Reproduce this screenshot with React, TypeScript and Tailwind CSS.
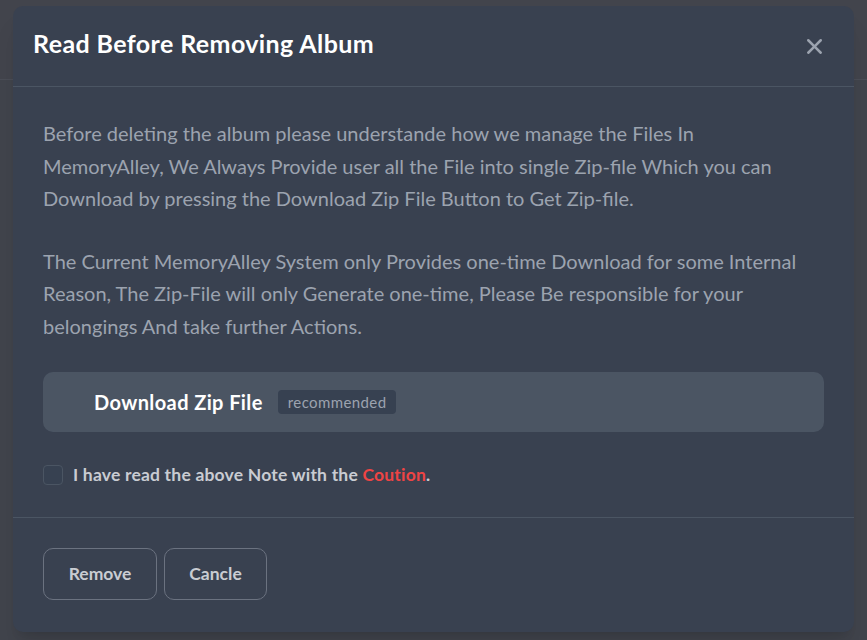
import React from "react";

const CloseIcon = () => (
  <svg
    aria-hidden="true"
    className="w-[25px] h-[25px]"
    fill="currentColor"
    viewBox="0 0 20 20"
    xmlns="http://www.w3.org/2000/svg"
  >
    <path
      fillRule="evenodd"
      d="M4.293 4.293a1 1 0 011.414 0L10 8.586l4.293-4.293a1 1 0 111.414 1.414L11.414 10l4.293 4.293a1 1 0 01-1.414 1.414L10 11.414l-4.293 4.293a1 1 0 01-1.414-1.414L8.586 10 4.293 5.707a1 1 0 010-1.414z"
      clipRule="evenodd"
    />
  </svg>
);

const App = () => {
  return (
    <div
      className="relative h-[640px] w-full overflow-hidden bg-[#41444c]"
      style={{ fontFamily: "Lato, 'Noto Sans', sans-serif" }}
    >
      {/* page behind the overlay */}
      <div className="h-[80px] border-b border-[#4a4d56] bg-[#42444c]" />

      {/* modal */}
      <div className="absolute left-[13px] top-[6px] w-[841px] rounded-[10px] bg-[#394150] shadow-xl">
        <div className="flex items-start justify-between border-b border-[#4b5563] p-[20px]">
          <h3 className="text-[25px] leading-[35px] font-bold tracking-[0.4px] text-white">
            Read Before Removing Album
          </h3>
          <button className="ml-auto inline-flex items-center rounded-lg p-[7.5px] text-[#9ca3af]">
            <CloseIcon />
          </button>
        </div>

        <div className="flex flex-col gap-[30px] p-[30px]">
          <p className="whitespace-nowrap text-[20px] leading-[32.5px] text-[#9ca3af]">
            Before deleting the album please understande how we manage the Files In
            <br />
            MemoryAlley, We Always Provide user all the File into single Zip-file Which you can
            <br />
            Download by pressing the Download Zip File Button to Get Zip-file.
          </p>
          <p className="whitespace-nowrap text-[20px] leading-[32.5px] text-[#9ca3af]">
            The Current MemoryAlley System only Provides one-time Download for some Internal
            <br />
            Reason, The Zip-File will only Generate one-time, Please Be responsible for your
            <br />
            belongings And take further Actions.
          </p>

          <div className="flex h-[60px] items-center rounded-[10px] bg-[#4b5563] pl-[51px]">
            <span className="text-[20px] font-bold tracking-[0.4px] text-white">Download Zip File</span>
            <span className="ml-[15px] inline-flex h-[24px] items-center rounded-[4px] bg-[#374151] px-[10px] text-[15px] tracking-[0.4px] text-[#9ca3af]">
              recommended
            </span>
          </div>

          <div className="flex items-center">
            <input
              type="checkbox"
              className="h-[20px] w-[20px] appearance-none rounded-[4px] border border-[#4b5563] bg-[#374151]"
            />
            <label className="ml-[10px] text-[17.5px] leading-[25px] font-bold tracking-[0.2px] text-[#c9ccd2]">
              I have read the above Note with the{" "}
              <span className="text-[#ef4444]">Coution</span>.
            </label>
          </div>
        </div>

        <div className="flex items-center gap-[7px] border-t border-[#4b5563] px-[30px] pt-[30px] pb-[32px]">
          <button className="h-[52px] w-[114px] rounded-[10px] border border-[#6b7280] text-[17.5px] font-bold text-[#c9ccd2]">
            Remove
          </button>
          <button className="h-[52px] w-[103px] rounded-[10px] border border-[#6b7280] text-[17.5px] font-bold text-[#c9ccd2]">
            Cancle
          </button>
        </div>
      </div>
    </div>
  );
};

export default App;
